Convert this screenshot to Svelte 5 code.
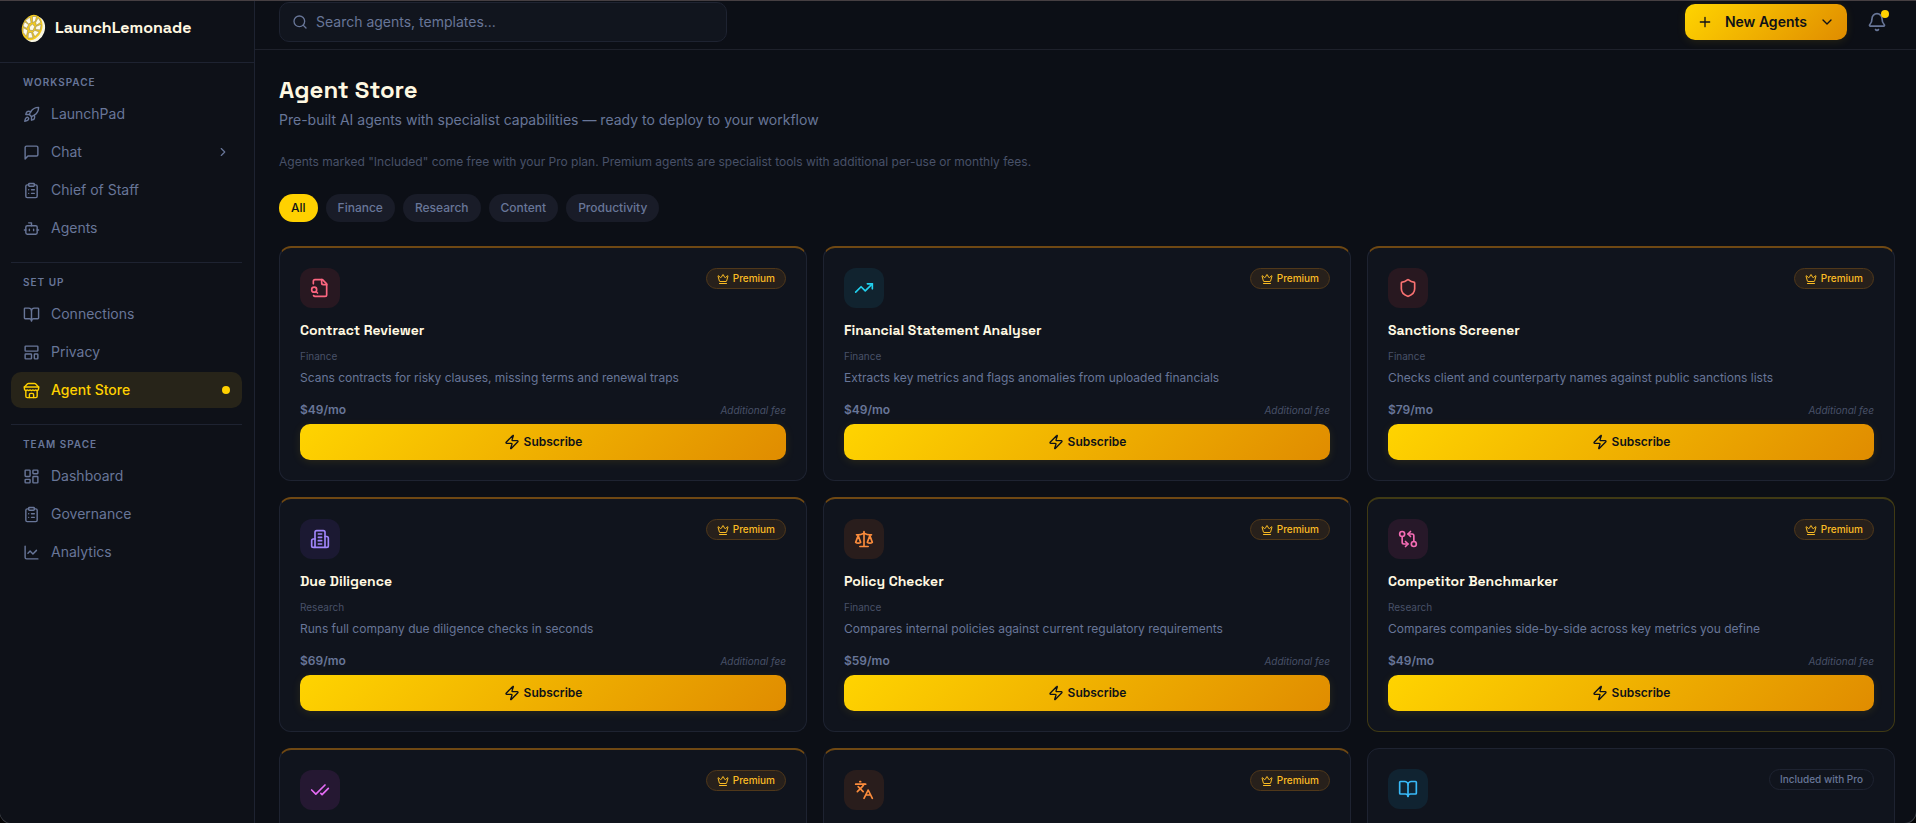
<script>
  const icons = {
    rocket: '<path d="M4.5 16.5c-1.5 1.26-2 5-2 5s3.74-.5 5-2c.71-.84.7-2.13-.09-2.91a2.18 2.18 0 0 0-2.91-.09z"/><path d="m12 15-3-3a22 22 0 0 1 2-3.95A12.88 12.88 0 0 1 22 2c0 2.72-.78 7.5-6 11a22.35 22.35 0 0 1-4 2z"/><path d="M9 12H4s.55-3.03 2-4c1.62-1.08 5 0 5 0"/><path d="M12 15v5s3.03-.55 4-2c1.08-1.62 0-5 0-5"/>',
    message: '<path d="M21 15a2 2 0 0 1-2 2H7l-4 4V5a2 2 0 0 1 2-2h14a2 2 0 0 1 2 2z"/>',
    clipboard: '<rect x="8" y="2" width="8" height="4" rx="1"/><path d="M16 4h2a2 2 0 0 1 2 2v14a2 2 0 0 1-2 2H6a2 2 0 0 1-2-2V6a2 2 0 0 1 2-2h2M12 11h4M12 16h4M8 11h.01M8 16h.01"/>',
    bot: '<path d="M12 8V4H8"/><rect x="4" y="8" width="16" height="12" rx="2"/><path d="M2 14h2M20 14h2M15 13v2M9 13v2"/>',
    book: '<path d="M12 7v14"/><path d="M3 18a1 1 0 0 1-1-1V4a1 1 0 0 1 1-1h5a4 4 0 0 1 4 4 4 4 0 0 1 4-4h5a1 1 0 0 1 1 1v13a1 1 0 0 1-1 1h-6a3 3 0 0 0-3 3 3 3 0 0 0-3-3z"/>',
    template: '<rect x="3" y="3" width="18" height="7" rx="1"/><rect x="3" y="14" width="9" height="7" rx="1"/><rect x="16" y="14" width="5" height="7" rx="1"/>',
    store: '<path d="m2 7 4.41-4.41A2 2 0 0 1 7.83 2h8.34a2 2 0 0 1 1.42.59L22 7"/><path d="M4 12v8a2 2 0 0 0 2 2h12a2 2 0 0 0 2-2v-8"/><path d="M15 22v-4a2 2 0 0 0-2-2h-2a2 2 0 0 0-2 2v4"/><path d="M2 7h20"/><path d="M22 7v3a2 2 0 0 1-2 2a2.7 2.7 0 0 1-1.59-.63.7.7 0 0 0-.82 0A2.7 2.7 0 0 1 16 12a2.7 2.7 0 0 1-1.59-.63.7.7 0 0 0-.82 0A2.7 2.7 0 0 1 12 12a2.7 2.7 0 0 1-1.59-.63.7.7 0 0 0-.82 0A2.7 2.7 0 0 1 8 12a2.7 2.7 0 0 1-1.59-.63.7.7 0 0 0-.82 0A2.7 2.7 0 0 1 4 12a2 2 0 0 1-2-2V7"/>',
    dashboard: '<rect x="3" y="3" width="7" height="9" rx="1"/><rect x="14" y="3" width="7" height="5" rx="1"/><rect x="14" y="12" width="7" height="9" rx="1"/><rect x="3" y="16" width="7" height="5" rx="1"/>',
    chart: '<path d="M3 3v16a2 2 0 0 0 2 2h16"/><path d="m19 9-5 5-4-4-3 3"/>',
    chevronRight: '<path d="m9 18 6-6-6-6"/>',
    chevronDown: '<path d="m6 9 6 6 6-6"/>',
    search: '<circle cx="11" cy="11" r="8"/><path d="m21 21-4.3-4.3"/>',
    plus: '<path d="M5 12h14M12 5v14"/>',
    bell: '<path d="M10.268 21a2 2 0 0 0 3.464 0"/><path d="M3.262 15.326A1 1 0 0 0 4 17h16a1 1 0 0 0 .74-1.673C19.41 13.956 18 12.499 18 8A6 6 0 0 0 6 8c0 4.499-1.411 5.956-2.738 7.326"/>',
    crown: '<path d="M11.562 3.266a.5.5 0 0 1 .876 0L15.39 8.87a1 1 0 0 0 1.516.294L21.183 5.5a.5.5 0 0 1 .798.519l-2.834 10.246a1 1 0 0 1-.956.734H5.81a1 1 0 0 1-.957-.734L2.02 6.02a.5.5 0 0 1 .798-.519l4.276 3.664a1 1 0 0 0 1.516-.294z"/><path d="M5 21h14"/>',
    zap: '<path d="M4 14a1 1 0 0 1-.78-1.63l9.9-10.2a.5.5 0 0 1 .86.46l-1.92 6.02A1 1 0 0 0 13 10h7a1 1 0 0 1 .78 1.63l-9.9 10.2a.5.5 0 0 1-.86-.46l1.92-6.02A1 1 0 0 0 11 14z"/>',
    fileSearch: '<path d="M14 2v4a2 2 0 0 0 2 2h4"/><path d="M4.268 21a2 2 0 0 0 1.727 1H18a2 2 0 0 0 2-2V7l-5-5H6a2 2 0 0 0-2 2v3"/><path d="m9 18-1.5-1.5"/><circle cx="5" cy="14" r="3"/>',
    trending: '<path d="m22 7-8.5 8.5-5-5L2 17"/><path d="M16 7h6v6"/>',
    shield: '<path d="M20 13c0 5-3.5 7.5-7.66 8.95a1 1 0 0 1-.67-.01C7.5 20.5 4 18 4 13V6a1 1 0 0 1 1-1c2 0 4.5-1.2 6.24-2.72a1.17 1.17 0 0 1 1.52 0C14.51 3.81 17 5 19 5a1 1 0 0 1 1 1z"/>',
    building: '<path d="M6 22V4a2 2 0 0 1 2-2h8a2 2 0 0 1 2 2v18Z"/><path d="M6 12H4a2 2 0 0 0-2 2v6a2 2 0 0 0 2 2h2"/><path d="M18 9h2a2 2 0 0 1 2 2v9a2 2 0 0 1-2 2h-2"/><path d="M10 6h4M10 10h4M10 14h4M10 18h4"/>',
    scale: '<path d="m16 16 3-8 3 8c-.87.65-1.92 1-3 1s-2.13-.35-3-1Z"/><path d="m2 16 3-8 3 8c-.87.65-1.92 1-3 1s-2.13-.35-3-1Z"/><path d="M7 21h10M12 3v18"/><path d="M3 7h2c2 0 5-1 7-2 2 1 5 2 7 2h2"/>',
    compare: '<circle cx="5" cy="6" r="3"/><path d="M12 6h5a2 2 0 0 1 2 2v7"/><path d="m15 9-3-3 3-3"/><circle cx="19" cy="18" r="3"/><path d="M12 18H7a2 2 0 0 1-2-2V9"/><path d="m9 15 3 3-3 3"/>',
    checks: '<path d="M18 6 7 17l-5-5"/><path d="m22 10-7.5 7.5L13 16"/>',
    languages: '<path d="m5 8 6 6"/><path d="m4 14 6-6 2-3"/><path d="M2 5h12M7 2h1"/><path d="m22 22-5-10-5 10M14 18h6"/>'
  };

  const sections = [
    { title: 'WORKSPACE', items: [
      { label: 'LaunchPad', icon: 'rocket' },
      { label: 'Chat', icon: 'message', expandable: true },
      { label: 'Chief of Staff', icon: 'clipboard' },
      { label: 'Agents', icon: 'bot' }
    ] },
    { title: 'SET UP', items: [
      { label: 'Connections', icon: 'book' },
      { label: 'Privacy', icon: 'template' },
      { label: 'Agent Store', icon: 'store', active: true }
    ] },
    { title: 'TEAM SPACE', items: [
      { label: 'Dashboard', icon: 'dashboard' },
      { label: 'Governance', icon: 'clipboard' },
      { label: 'Analytics', icon: 'chart' }
    ] }
  ];

  const filters = ['All', 'Finance', 'Research', 'Content', 'Productivity'];
  let selected = $state('All');

  const agents = [
    { name: 'Contract Reviewer', category: 'Finance', text: 'Scans contracts for risky clauses, missing terms and renewal traps', price: '$49/mo', icon: 'fileSearch', tone: 'rose', premium: true },
    { name: 'Financial Statement Analyser', category: 'Finance', text: 'Extracts key metrics and flags anomalies from uploaded financials', price: '$49/mo', icon: 'trending', tone: 'cyan', premium: true },
    { name: 'Sanctions Screener', category: 'Finance', text: 'Checks client and counterparty names against public sanctions lists', price: '$79/mo', icon: 'shield', tone: 'red', premium: true },
    { name: 'Due Diligence', category: 'Research', text: 'Runs full company due diligence checks in seconds', price: '$69/mo', icon: 'building', tone: 'violet', premium: true },
    { name: 'Policy Checker', category: 'Finance', text: 'Compares internal policies against current regulatory requirements', price: '$59/mo', icon: 'scale', tone: 'orange', premium: true },
    { name: 'Competitor Benchmarker', category: 'Research', text: 'Compares companies side-by-side across key metrics you define', price: '$49/mo', icon: 'compare', tone: 'pink', premium: true, highlighted: true },
    { icon: 'checks', tone: 'fuchsia', premium: true },
    { icon: 'languages', tone: 'orange', premium: true },
    { icon: 'book', tone: 'sky', premium: false }
  ];
</script>

{#snippet icon(name, size)}
  <svg class="icon" width={size} height={size} viewBox="0 0 24 24" aria-hidden="true">{@html icons[name]}</svg>
{/snippet}

<div class="shell">
  <aside class="sidebar">
    <div class="brand">
      <svg class="logo" width="26" height="30" viewBox="0 0 26 30" aria-hidden="true">
        <g transform="rotate(20 13 15)">
          <ellipse cx="14.6" cy="15.6" rx="10.4" ry="13.2" fill="#f7f5e2" />
          <ellipse cx="12" cy="14.8" rx="10" ry="13" fill="#f4cb1f" />
          <g fill="#fffbe8" stroke="#8f8252" stroke-width="0.5" stroke-linejoin="round">
            <path d="M8.6 4.4 12.4 3l.4 5-2.2 2z" />
            <path d="m14.4 3.6 4 3.2-3.2 4.6-1.6-2.6z" />
            <path d="m19.4 8.8 1 5.6-4.6 1.2-.6-3z" />
            <path d="m20.2 16.6-2.4 6-3.4-3.2 1-2.8z" />
            <path d="m13 19.6 3.4 4.6-4.6 2-1.4-5z" />
            <path d="m8.8 18.8.8 6.4-4.4-2.8-1.6-4.4z" />
            <path d="m3 12 4.8 1.4-.6 4-4.2-.6z" />
            <path d="m6.4 5.8 3 4.8-2 2.2-4-2.2z" />
            <path d="m11.2 11.4 3 1.8-.4 4.2-3.2.8-1.4-2.8z" />
          </g>
        </g>
      </svg>
      <span>LaunchLemonade</span>
    </div>
    <nav aria-label="Main">
      {#each sections as section}
        <section>
          <h2>{section.title}</h2>
          {#each section.items as item}
            <a href="#top" class:active={item.active}>
              {@render icon(item.icon, 17)}
              <span class="label">{item.label}</span>
              {#if item.expandable}{@render icon('chevronRight', 14)}{/if}
              {#if item.active}<span class="dot"></span>{/if}
            </a>
          {/each}
        </section>
      {/each}
    </nav>
  </aside>

  <div class="page">
    <header>
      <label class="search">
        {@render icon('search', 16)}
        <input type="search" placeholder="Search agents, templates..." aria-label="Search agents, templates..." />
      </label>
      <div class="actions">
        <button class="gold new">
          {@render icon('plus', 16)}
          <span>New Agents</span>
          {@render icon('chevronDown', 16)}
        </button>
        <button class="bell" aria-label="Notifications">
          {@render icon('bell', 20)}
          <span class="dot"></span>
        </button>
      </div>
    </header>

    <main>
      <h1>Agent Store</h1>
      <p class="lead">Pre-built AI agents with specialist capabilities — ready to deploy to your workflow</p>
      <p class="note">Agents marked "Included" come free with your Pro plan. Premium agents are specialist tools with additional per-use or monthly fees.</p>
      <div class="filters">
        {#each filters as filter}
          <button class:selected={selected === filter} onclick={() => (selected = filter)}>{filter}</button>
        {/each}
      </div>

      <div class="grid">
        {#each agents as agent}
          <article class:premium={agent.premium} class:highlighted={agent.highlighted}>
            <div class="top">
              <span class="tile {agent.tone}">{@render icon(agent.icon, 20)}</span>
              {#if agent.premium}
                <span class="badge">{@render icon('crown', 12)}Premium</span>
              {:else}
                <span class="badge included">Included with Pro</span>
              {/if}
            </div>
            {#if agent.name}
              <h3>{agent.name}</h3>
              <p class="category">{agent.category}</p>
              <p class="text">{agent.text}</p>
              <div class="price"><strong>{agent.price}</strong><em>Additional fee</em></div>
              <button class="gold subscribe">{@render icon('zap', 16)}Subscribe</button>
            {/if}
          </article>
        {/each}
      </div>
    </main>
  </div>
</div>

<style>
  :global(body) {
    margin: 0;
    background: #050506;
  }

  .shell, .shell * {
    box-sizing: border-box;
  }

  .shell {
    display: flex;
    height: 100vh;
    overflow: hidden;
    border-top: 1px solid #463f42;
    border-radius: 0 0 12px 12px;
    box-shadow: 0 0 0 1px #3a3d44;
    background: #0c0f16;
    color: #687698;
    font: 400 14px/20px Inter, sans-serif;
  }

  h1, h2, h3, p {
    margin: 0;
  }

  button, input {
    font: inherit;
    color: inherit;
    border: 0;
    background: none;
    padding: 0;
  }

  button {
    cursor: pointer;
  }

  .icon {
    display: block;
    flex: none;
    fill: none;
    stroke: currentColor;
    stroke-width: 2;
    stroke-linecap: round;
    stroke-linejoin: round;
  }

  .dot {
    width: 8px;
    height: 8px;
    border-radius: 50%;
    background: #ffd100;
  }

  .sidebar {
    flex: none;
    width: 255px;
    border-right: 1px solid #1e2331;
    background: #0e1118;
  }

  .brand {
    display: flex;
    align-items: center;
    gap: 9px;
    height: 62px;
    padding: 0 20px 8px;
    border-bottom: 1px solid #1e2331;
    color: #fff8e1;
    font: 600 16px/24px "Space Grotesk", Inter, sans-serif;
  }

  nav {
    padding: 0 12px 0 11px;
  }

  section {
    display: flex;
    flex-direction: column;
    gap: 2px;
    padding: 12px 0 16px;
  }

  section + section {
    border-top: 1px solid #1e2331;
  }

  h2 {
    padding: 0 12px;
    margin-bottom: 4px;
    font-size: 10px;
    line-height: 15px;
    font-weight: 600;
    letter-spacing: 1px;
  }

  nav a {
    display: flex;
    align-items: center;
    gap: 11px;
    height: 36px;
    padding: 0 12px;
    border-radius: 10px;
    color: inherit;
    text-decoration: none;
  }

  nav a.active {
    background: #272419;
    color: #ffd100;
    font-weight: 500;
  }

  .label {
    flex: 1;
  }

  .page {
    flex: 1;
    min-width: 0;
    display: flex;
    flex-direction: column;
  }

  header {
    flex: none;
    display: flex;
    justify-content: space-between;
    align-items: flex-start;
    height: 49px;
    padding: 1px 29px 0 24px;
    border-bottom: 1px solid #1e212b;
  }

  .search {
    display: flex;
    align-items: center;
    gap: 8px;
    width: 448px;
    height: 40px;
    padding: 0 12px;
    border: 1px solid #1e2331;
    border-radius: 10px;
    background: #11151e;
  }

  .search input {
    flex: 1;
    outline: none;
  }

  .search input::placeholder {
    color: #687698;
    opacity: 1;
  }

  .actions {
    display: flex;
    align-items: center;
    gap: 20px;
    padding-top: 2px;
  }

  .gold {
    display: flex;
    align-items: center;
    justify-content: center;
    height: 36px;
    border-radius: 10px;
    background: linear-gradient(135deg, #ffd400, #e08c00);
    box-shadow: 0 2px 10px rgba(255, 209, 0, 0.1);
    color: #0e1118;
    font-weight: 600;
  }

  .new {
    gap: 12px;
    padding: 0 12px;
  }

  .bell {
    position: relative;
  }

  .bell .dot {
    position: absolute;
    top: -2px;
    right: -2px;
  }

  main {
    flex: 1;
    min-height: 0;
    overflow: hidden;
    padding: 24px 21px 0 24px;
  }

  h1 {
    color: #fff8e1;
    font: 700 24px/32px "Space Grotesk", Inter, sans-serif;
  }

  .lead {
    margin-top: 4px;
  }

  .note {
    margin-top: 24px;
    font-size: 12px;
    line-height: 16px;
    color: #485168;
  }

  .filters {
    display: flex;
    gap: 8px;
    margin: 24px 0;
  }

  .filters button {
    height: 28px;
    padding: 0 12px;
    border-radius: 14px;
    background: #191c28;
    font-size: 12px;
    line-height: 16px;
    font-weight: 500;
  }

  .filters .selected {
    background: #ffd100;
    color: #0e1118;
  }

  .grid {
    display: grid;
    grid-template-columns: repeat(3, minmax(0, 1fr));
    grid-auto-rows: minmax(235px, auto);
    gap: 16px;
  }

  article {
    padding: 20px;
    border: 1px solid #1e2331;
    border-radius: 12px;
    background: #10141d;
  }

  article.premium {
    border-top: 2px solid #6f4813;
  }

  article.highlighted {
    border-color: #403a14;
  }

  .top {
    display: flex;
    justify-content: space-between;
    align-items: flex-start;
  }

  .tile {
    display: grid;
    place-items: center;
    width: 40px;
    height: 40px;
    border-radius: 12px;
  }

  .rose { color: #fb6680; background: #281821; }
  .cyan { color: #22d0ee; background: #11232f; }
  .red { color: #f87171; background: #281820; }
  .violet { color: #a085fa; background: #1b1932; }
  .orange { color: #fb8c3c; background: #291d1c; }
  .pink { color: #f46cb4; background: #271829; }
  .fuchsia { color: #e66cf6; background: #251832; }
  .sky { color: #38b9f8; background: #102331; }

  .badge {
    display: flex;
    align-items: center;
    gap: 4px;
    padding: 2px 10px;
    border: 1px solid #50381a;
    border-radius: 11px;
    background: #27201b;
    color: #fbbc24;
    font-size: 10px;
    line-height: 15px;
    font-weight: 500;
  }

  .badge.included {
    border-color: #1e2331;
    background: none;
    color: #687698;
  }

  h3 {
    margin-top: 12px;
    color: #fff8e1;
    font: 600 14px/20px "Space Grotesk", Inter, sans-serif;
  }

  .category {
    margin-top: 8px;
    font-size: 10px;
    line-height: 16px;
    color: #485168;
  }

  .text {
    margin-top: 4px;
    font-size: 12px;
    line-height: 20px;
  }

  .price {
    display: flex;
    justify-content: space-between;
    align-items: baseline;
    margin: 14px 0 6px;
    font-size: 12px;
    line-height: 16px;
  }

  .price strong {
    font-weight: 600;
  }

  .price em {
    font-size: 10px;
    color: #485168;
  }

  .subscribe {
    gap: 4px;
    width: 100%;
    font-size: 12px;
  }
</style>
